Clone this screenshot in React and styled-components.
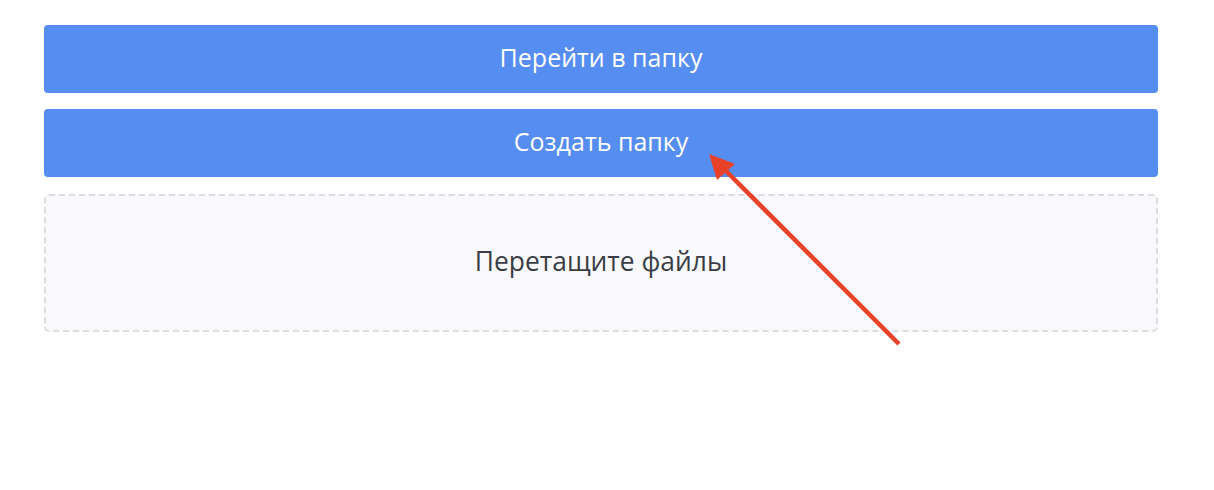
import styled, { createGlobalStyle } from "styled-components";

const GlobalStyle = createGlobalStyle`
    body {
        margin: 0;
        background: #ffffff;
        font-family: "Open Sans", "Noto Sans", sans-serif;
    }
`;

const Page = styled.div`
    position: relative;
    width: 1214px;
    height: 490px;
    box-sizing: border-box;
    padding: 25px 56px 0 44px;
    display: flex;
    flex-direction: column;
    gap: 16px;
`;

const Button = styled.button`
    height: 68px;
    width: 100%;
    padding: 0 0 5px;
    border: none;
    border-radius: 4px;
    background: #558df0;
    color: #ffffff;
    font-family: inherit;
    font-size: 25px;
    cursor: pointer;
`;

const DropZone = styled.div`
    height: 138px;
    margin-top: 1px;
    padding-bottom: 4px;
    box-sizing: border-box;
    border: 2px dashed #dcdde0;
    border-radius: 5px;
    background: #f9f9fb;
    display: flex;
    align-items: center;
    justify-content: center;
    color: #3a3d45;
    font-size: 26.4px;
`;

const Overlay = styled.svg`
    position: absolute;
    left: 0;
    top: 0;
    pointer-events: none;
`;

export default function App() {
    return (
        <>
            <GlobalStyle />
            <Page>
                <Button>Перейти в папку</Button>
                <Button>Создать папку</Button>
                <DropZone>Перетащите файлы</DropZone>
                <Overlay width="1214" height="490">
                    <line
                        x1="899"
                        y1="344"
                        x2="722"
                        y2="167"
                        stroke="#e8412a"
                        strokeWidth="4.5"
                    />
                    <polygon points="709,154 735,164 717,180" fill="#e8412a" />
                </Overlay>
            </Page>
        </>
    );
}
